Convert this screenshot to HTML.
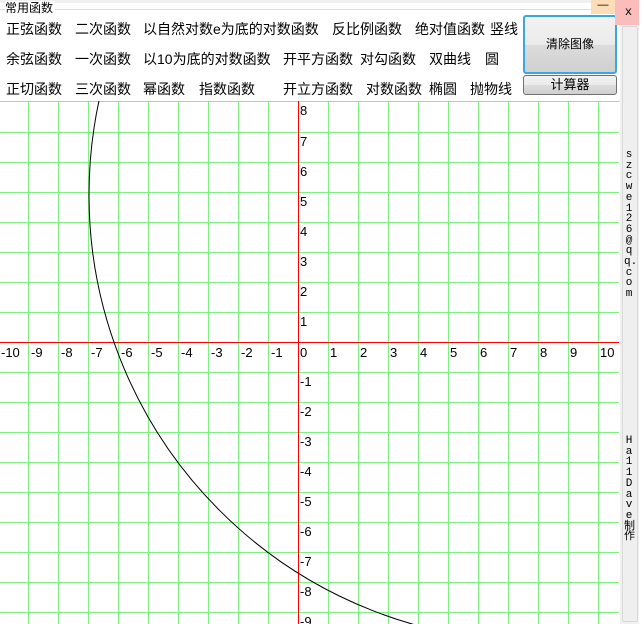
<!DOCTYPE html>
<html><head><meta charset="utf-8"><style>
html,body{margin:0;padding:0;width:642px;height:624px;overflow:hidden;background:#fff;position:relative;font-family:"Liberation Sans","Noto Sans CJK SC",sans-serif}
.t{position:absolute;font-size:14px;line-height:16px;color:#000;white-space:nowrap}
.gb{position:absolute;left:0;top:9px;width:620px;height:91px;border-top:1px solid #dcdcdc;border-right:1px solid #dcdcdc;border-bottom:1px solid #dcdcdc;border-radius:0 0 3px 0}
.btn{position:absolute;font-size:12px;text-align:center;color:#000;border-radius:3px}
.v{position:absolute;left:624px;width:10px;font-family:"Liberation Mono","Noto Sans CJK SC",monospace;font-size:11px;line-height:10.7px;text-align:center;color:#000;word-break:break-all}
</style></head><body>
<div style="position:absolute;left:0;top:0;width:642px;height:3px;background:#f0f0f0"></div>
<div class="gb"></div>
<div class="t" style="left:5px;top:1px;font-size:12px;line-height:14px;background:#fff;padding-right:2px">常用函数</div>

<div class="t" style="left:6px;top:21px">正弦函数</div>
<div class="t" style="left:75px;top:21px">二次函数</div>
<div class="t" style="left:143px;top:21px">以自然对数e为底的对数函数</div>
<div class="t" style="left:332px;top:21px">反比例函数</div>
<div class="t" style="left:415px;top:21px">绝对值函数</div>
<div class="t" style="left:490px;top:21px">竖线</div>

<div class="t" style="left:6px;top:51px">余弦函数</div>
<div class="t" style="left:75px;top:51px">一次函数</div>
<div class="t" style="left:143px;top:51px">以10为底的对数函数</div>
<div class="t" style="left:283px;top:51px">开平方函数</div>
<div class="t" style="left:360px;top:51px">对勾函数</div>
<div class="t" style="left:429px;top:51px">双曲线</div>
<div class="t" style="left:485px;top:51px">圆</div>

<div class="t" style="left:6px;top:81px">正切函数</div>
<div class="t" style="left:75px;top:81px">三次函数</div>
<div class="t" style="left:143px;top:81px">幂函数</div>
<div class="t" style="left:199px;top:81px">指数函数</div>
<div class="t" style="left:283px;top:81px">开立方函数</div>
<div class="t" style="left:366px;top:81px">对数函数</div>
<div class="t" style="left:429px;top:81px">椭圆</div>
<div class="t" style="left:470px;top:81px">抛物线</div>

<div class="btn" style="left:523px;top:15px;width:90px;height:55px;line-height:55px;border:2px solid #3aa6e6;background:linear-gradient(#f2f2f2 0%,#ebebeb 50%,#dcdcdc 51%,#d0d0d0 100%)">清除图像</div>
<div class="btn" style="left:523px;top:75px;width:92px;height:18px;line-height:18px;border:1px solid #707070;font-size:13px;background:linear-gradient(#f2f2f2 0%,#ebebeb 50%,#dddddd 51%,#cfcfcf 100%)">计算器</div>

<div style="position:absolute;left:591px;top:0;width:24px;height:14px;background:#fddcb8;font-size:11px;text-align:center;line-height:10px">—</div>
<div style="position:absolute;left:615px;top:0;width:27px;height:25px;background:#fbbcbc;font-family:'Liberation Mono',monospace;font-size:12px;text-align:center;line-height:24px">x</div>

<div style="position:absolute;left:620px;top:25px;width:22px;height:599px;background:#f0f0f0"></div>
<div style="position:absolute;left:622px;top:26px;width:14px;height:594px;border:1px solid #dadada;background:#efefef;border-radius:2px"></div>
<div style="position:absolute;left:639px;top:0;width:3px;height:624px;background:#fff"></div>
<div class="v" style="top:150px">szcwe126@qq.com</div>
<div class="v" style="top:436px">Ha11Dave<span style="font-size:11px">制作</span></div>

<svg style="position:absolute;left:0;top:0" width="620" height="624" viewBox="0 0 620 624">
<defs><clipPath id="c"><rect x="0" y="101" width="619" height="523"/></clipPath></defs>
<g clip-path="url(#c)" stroke="#80f080" stroke-width="1" shape-rendering="crispEdges">
<path d="M28.5 101V624M58.5 101V624M88.5 101V624M118.5 101V624M148.5 101V624M178.5 101V624M208.5 101V624M238.5 101V624M268.5 101V624M328.5 101V624M358.5 101V624M388.5 101V624M418.5 101V624M448.5 101V624M478.5 101V624M508.5 101V624M538.5 101V624M568.5 101V624M598.5 101V624"/>
<path d="M0 101.5H619M0 132.5H619M0 162.5H619M0 192.5H619M0 222.5H619M0 252.5H619M0 282.5H619M0 312.5H619M0 372.5H619M0 402.5H619M0 432.5H619M0 462.5H619M0 492.5H619M0 522.5H619M0 552.5H619M0 582.5H619M0 612.5H619"/>
<path d="M298.5 101V624M0 342.5H619" stroke="#ff0000"/>
</g>
<g clip-path="url(#c)"><circle cx="535.3" cy="195" r="446.3" fill="none" stroke="#000" stroke-width="1"/></g>
<g font-family="Liberation Sans,sans-serif" font-size="13" fill="#000">
<text x="1" y="357">-10</text><text x="31" y="357">-9</text><text x="61" y="357">-8</text><text x="91" y="357">-7</text><text x="121" y="357">-6</text><text x="151" y="357">-5</text><text x="181" y="357">-4</text><text x="211" y="357">-3</text><text x="241" y="357">-2</text><text x="271" y="357">-1</text><text x="300" y="357">0</text><text x="330" y="357">1</text><text x="360" y="357">2</text><text x="390" y="357">3</text><text x="420" y="357">4</text><text x="450" y="357">5</text><text x="480" y="357">6</text><text x="510" y="357">7</text><text x="540" y="357">8</text><text x="570" y="357">9</text><text x="600" y="357">10</text>
<text x="300" y="115">8</text><text x="300" y="146">7</text><text x="300" y="176">6</text><text x="300" y="206">5</text><text x="300" y="236">4</text><text x="300" y="266">3</text><text x="300" y="296">2</text><text x="300" y="326">1</text>
<text x="300" y="386">-1</text><text x="300" y="416">-2</text><text x="300" y="446">-3</text><text x="300" y="476">-4</text><text x="300" y="506">-5</text><text x="300" y="536">-6</text><text x="300" y="566">-7</text><text x="300" y="596">-8</text><text x="300" y="626">-9</text>
</g>
</svg>
</body></html>
